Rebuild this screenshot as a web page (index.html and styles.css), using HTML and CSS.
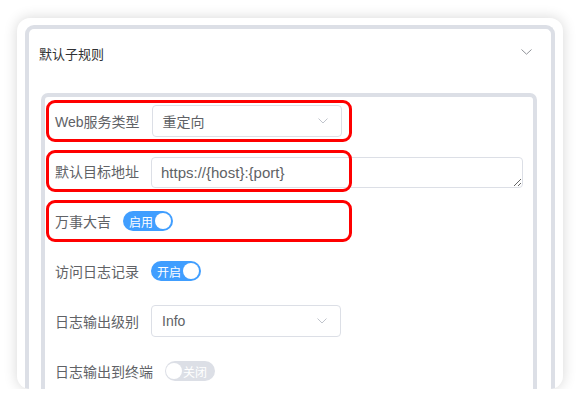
FILE: index.html
```html
<!DOCTYPE html>
<html>
<head>
	<meta charset="utf-8">
	<title>默认子规则</title>
	<link rel="stylesheet" href="styles.css">
</head>
<body>
	<div class="window">
		<div class="card">
			<div class="card-head">
				<span class="card-title">默认子规则</span>
				<svg class="arrow" width="11" height="6" viewBox="0 0 11 6"><path d="M0.5 0.5 L5.5 5.2 L10.5 0.5" fill="none" stroke="#909399" stroke-width="1"/></svg>
			</div>
			<div class="rule-box">
				<div class="form-item">
					<span class="mark"></span>
					<label class="label">Web服务类型</label>
					<div class="select">
						<span>重定向</span>
						<svg class="arrow" width="10" height="6" viewBox="0 0 10 6"><path d="M0.5 0.5 L5 5 L9.5 0.5" fill="none" stroke="#c0c4cc" stroke-width="1"/></svg>
					</div>
				</div>
				<div class="form-item">
					<span class="mark"></span>
					<label class="label">默认目标地址</label>
					<textarea class="textarea">https://{host}:{port}</textarea>
				</div>
				<div class="form-item">
					<span class="mark"></span>
					<label class="label">万事大吉</label>
					<div class="switch on"><span class="switch-text">启用</span><span class="knob"></span></div>
				</div>
				<div class="form-item">
					<label class="label">访问日志记录</label>
					<div class="switch on"><span class="switch-text">开启</span><span class="knob"></span></div>
				</div>
				<div class="form-item">
					<label class="label">日志输出级别</label>
					<div class="select">
						<span>Info</span>
						<svg class="arrow" width="10" height="6" viewBox="0 0 10 6"><path d="M0.5 0.5 L5 5 L9.5 0.5" fill="none" stroke="#c0c4cc" stroke-width="1"/></svg>
					</div>
				</div>
				<div class="form-item">
					<label class="label">日志输出到终端</label>
					<div class="switch off"><span class="knob"></span><span class="switch-text">关闭</span></div>
				</div>
			</div>
		</div>
	</div>
</body>
</html>
```

FILE: styles.css
```css
body{margin: 0;background: #ffffff;font-family: "Liberation Sans", "Noto Sans CJK SC", sans-serif;}
.window{width: 546px;height: 371px;margin: 18px 0 0 17px;background: #ffffff;border-radius: 13px;box-shadow: 0 0 14px rgba(0,0,0,0.16);overflow: hidden;padding: 7px 8px 0 8px;box-sizing: border-box;}
.card{border: 4px solid #dcdfe6;border-bottom: none;border-radius: 9px 9px 0 0;height: 400px;padding: 0 14px 0 12px;}
.card-head{height: 48px;display: flex;align-items: center;justify-content: space-between;padding: 0 5px 0 0;margin-left: -2px;}
.card-title{font-size: 13px;color: #303133;}
.card-head .arrow{margin-top: -3px;}
.rule-box{border: 4px solid #dcdfe6;border-bottom: none;border-radius: 7px 7px 0 0;height: 400px;margin-top: 16px;padding: 3px 0 0 1px;}
.form-item{position: relative;height: 42px;margin-bottom: 8px;display: flex;align-items: center;padding: 0 9px;}
.mark{position: absolute;left: 0;top: 0;width: 306px;height: 42px;box-sizing: border-box;border: 3px solid #ff0000;border-radius: 9px;}
.label{font-size: 14px;color: #606266;padding-right: 12px;white-space: nowrap;}
.select{width: 190px;height: 32px;box-sizing: border-box;border: 1px solid #dcdfe6;border-radius: 4px;display: flex;align-items: center;justify-content: space-between;padding: 0 13px 0 10px;font-size: 14px;color: #606266;}
.textarea{width: 372px;height: 31px;box-sizing: border-box;border: 1px solid #dcdfe6;border-radius: 4px;padding: 4px 9px;font-family: inherit;font-size: 15px;color: #606266;line-height: 21px;resize: vertical;margin-top: 3px;}
.switch{height: 20px;width: 50px;box-sizing: border-box;border-radius: 10px;display: flex;align-items: center;padding: 0 2px;}
.switch.on{background: #409eff;justify-content: space-between;padding-left: 6px;}
.switch.off{background: #dcdfe6;padding-left: 1px;}
.switch-text{font-size: 12px;color: #ffffff;}
.switch.off .switch-text{margin-left: 1px;}
.knob{width: 16px;height: 16px;border-radius: 50%;background: #ffffff;}
```
